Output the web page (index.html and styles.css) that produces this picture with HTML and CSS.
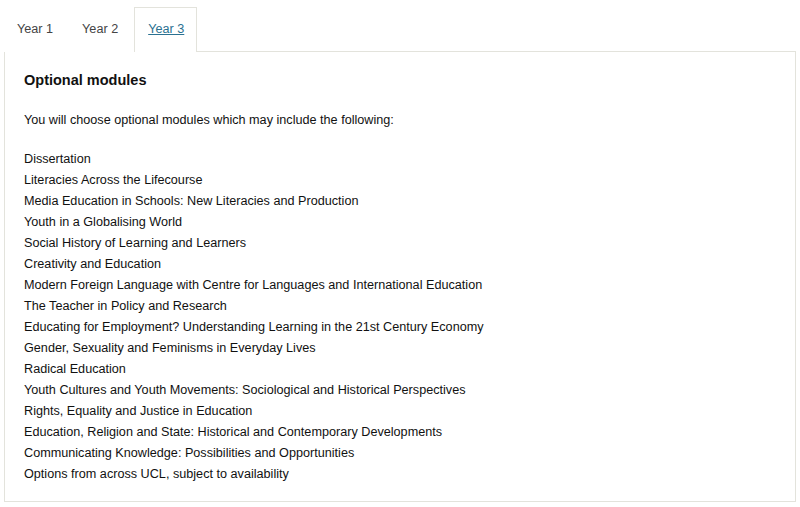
FILE: index.html
```html
<!DOCTYPE html>
<html>
<head>
  <meta charset="utf-8">
  <link rel="stylesheet" href="styles.css">
</head>
<body>
  <div class="tabs-wrap">
    <ul class="tab-list">
      <li class="tab"><a href="#">Year 1</a></li>
      <li class="tab"><a href="#">Year 2</a></li>
      <li class="tab active"><a href="#">Year 3</a></li>
    </ul>

    <div class="tab-panel">
      <h3 class="panel-title">Optional modules</h3>
      <p class="intro">You will choose optional modules which may include the following:</p>
      <ul class="module-list">
        <li>Dissertation</li>
        <li>Literacies Across the Lifecourse</li>
        <li>Media Education in Schools: New Literacies and Production</li>
        <li>Youth in a Globalising World</li>
        <li>Social History of Learning and Learners</li>
        <li>Creativity and Education</li>
        <li>Modern Foreign Language with Centre for Languages and International Education</li>
        <li>The Teacher in Policy and Research</li>
        <li>Educating for Employment? Understanding Learning in the 21st Century Economy</li>
        <li>Gender, Sexuality and Feminisms in Everyday Lives</li>
        <li>Radical Education</li>
        <li>Youth Cultures and Youth Movements: Sociological and Historical Perspectives</li>
        <li>Rights, Equality and Justice in Education</li>
        <li>Education, Religion and State: Historical and Contemporary Developments</li>
        <li>Communicating Knowledge: Possibilities and Opportunities</li>
        <li>Options from across UCL, subject to availability</li>
      </ul>
    </div>
  </div>
</body>
</html>
```

FILE: styles.css
```css
body {
  margin: 0;
  background: #fff;
  font-family: "Liberation Sans", Arial, sans-serif;
  font-size: 12.65px;
  color: #111;
}

.tabs-wrap {
  padding: 7px 4px 0 4px;
}

.tab-list {
  display: flex;
  list-style: none;
  margin: 0;
  padding: 0;
}

.tab {
  border: 1px solid transparent;
  border-bottom: none;
  margin-bottom: -1px;
  background: #fff;
}

.tab a {
  display: block;
  padding: 14px 13px 15px 12px;
  line-height: 15px;
  color: #444;
  text-decoration: none;
}

.tab:nth-child(2) a {
  padding-left: 14px;
  padding-right: 15px;
}

.tab.active {
  border-color: #e3e3dc;
  position: relative;
  z-index: 1;
}

.tab.active a {
  color: #2b7191;
  text-decoration: underline;
  padding-left: 13px;
  padding-right: 12px;
}

.tab-panel {
  border: 1px solid #e3e3dc;
  padding: 19px 19px 20px 19px;
  box-sizing: border-box;
  width: 792px;
  height: 451px;
}

.panel-title {
  margin: 0;
  font-size: 14.5px;
  font-weight: 700;
  line-height: 18px;
  color: #111;
}

.intro {
  margin: 21px 0 18px 0;
  line-height: 21px;
}

.module-list {
  list-style: none;
  margin: 0;
  padding: 0;
}

.module-list li {
  line-height: 21px;
}
```
